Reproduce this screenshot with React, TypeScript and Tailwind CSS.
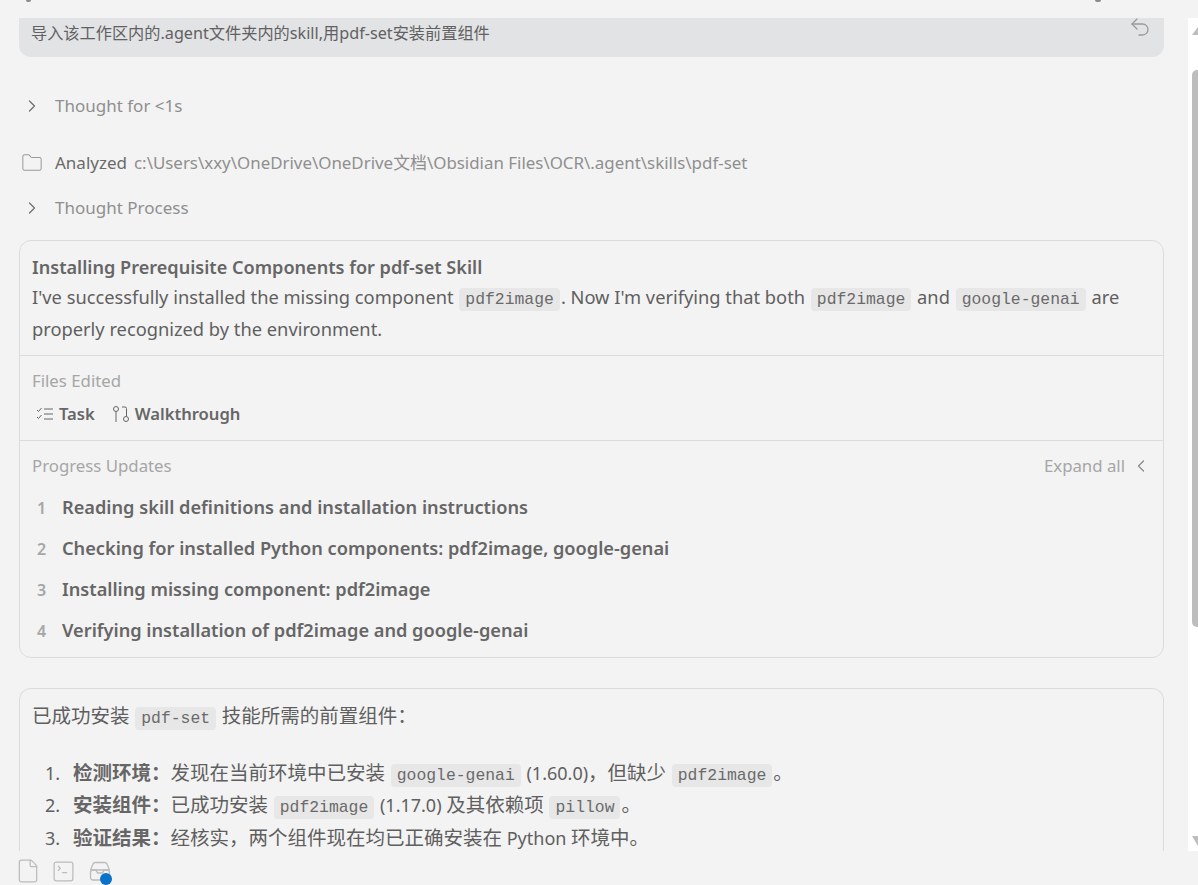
import React from 'react';
import { ChevronRight, ChevronLeft, Undo2, Folder, File, SquareTerminal } from 'lucide-react';

const FONT = "font-['Noto_Sans','Noto_Sans_CJK_SC',sans-serif]";

function Code({ children }: { children: React.ReactNode }) {
  return (
    <code className="mx-[1px] rounded-[4px] bg-[#e7e7e7] px-[6px] py-[2px] font-['Liberation_Mono',monospace] text-[16.4px] leading-none text-[#6a6a6a]">
      {children}
    </code>
  );
}

// the CJK runs are a bit larger than the latin text around them
function Zh({ children }: { children: React.ReactNode }) {
  return <span className="text-[19.5px] leading-none">{children}</span>;
}

function ToggleRow({ label, className }: { label: string; className: string }) {
  return (
    <div className={`flex items-center ${className}`}>
      <div className="flex w-[55px] justify-start pl-[22px]">
        <ChevronRight size={20} strokeWidth={1.5} className="text-[#707070]" />
      </div>
      <span className="text-[17px] text-[#8f8f8f]">{label}</span>
    </div>
  );
}

function TaskIcon() {
  return (
    <svg width="20" height="16" viewBox="0 0 20 16" fill="none" stroke="#666" strokeWidth="1">
      <path d="M2 4l1.5 1.5L6.5 2M2 11l1.5 1.5L6.5 9" />
      <path d="M9 3h9M9 8h9M9 13h9" />
    </svg>
  );
}

function WalkthroughIcon() {
  return (
    <svg width="20" height="18" viewBox="0 0 20 18" fill="none" stroke="#666" strokeWidth="1">
      <circle cx="5" cy="4" r="2.5" />
      <path d="M5 6.5V17" />
      <path d="M11 2h3a1.5 1.5 0 0 1 1.5 1.5V11" />
      <circle cx="15" cy="14" r="2.5" />
    </svg>
  );
}

function InboxIcon() {
  return (
    <svg width="22" height="21" viewBox="0 0 22 21" fill="none" stroke="#bcbcbc" strokeWidth="1.3">
      <path d="M1.5 9l2.5-6A2.5 2.5 0 0 1 6.3 1.5h9.4A2.5 2.5 0 0 1 18 3l2.5 6" />
      <rect x="1.5" y="9" width="19" height="10" rx="2.5" />
      <path d="M2 9h5l1.5 3h5L15 9h5" />
    </svg>
  );
}

const progress = [
  'Reading skill definitions and installation instructions',
  'Checking for installed Python components: pdf2image, google-genai',
  'Installing missing component: pdf2image',
  'Verifying installation of pdf2image and google-genai',
];

export default function App() {
  return (
    <div className={`flex h-[885px] w-[1198px] flex-col overflow-hidden bg-[#f3f3f3] ${FONT}`}>
      <div className="flex h-[18px] shrink-0 items-start justify-between pl-[26px] pr-[97px]">
        <div className="h-[2px] w-[5px] rounded-b-[2px] bg-[#8a8a8a]" />
        <div className="h-[2px] w-[6px] rounded-b-[2px] bg-[#8a8a8a]" />
      </div>

      <div className="flex h-[833px] shrink-0">
        {/* conversation */}
        <div className="h-full w-[1188px] overflow-hidden pl-[19px] pr-[24px]">
          <div className="flex h-[39px] items-start justify-between rounded-b-[12px] bg-[#e2e3e5] pl-[12px] pr-[12px]">
            <span className="pt-[4px] text-[16.2px] leading-[22px] text-[#616161]">
              导入该工作区内的.agent文件夹内的skill,用pdf-set安装前置组件
            </span>
            <Undo2 size={24} strokeWidth={1.3} className="-mt-[3px] text-[#9a9a9a]" />
          </div>

          <div className="-ml-[19px]">
            <ToggleRow label="Thought for <1s" className="mt-[36px] h-[26px]" />

            <div className="mt-[31px] flex h-[26px] items-center">
              <div className="w-[55px] pl-[21px]">
                <Folder size={22} strokeWidth={1.1} className="text-[#9a9a9a]" />
              </div>
              <span className="text-[17px] text-[#6a6a6a]">Analyzed</span>
              <span className="ml-[7px] text-[16.9px] text-[#8f8f8f]">
                c:\Users\xxy\OneDrive\OneDrive文档\Obsidian Files\OCR\.agent\skills\pdf-set
              </span>
            </div>

            <ToggleRow label="Thought Process" className="mt-[19px] h-[26px]" />
          </div>

          {/* progress card */}
          <div className="mt-[19px] rounded-[12px] border border-[#dcdcdc]">
            <div className="border-b border-[#dcdcdc] px-[12px] pb-[10px] pt-[13px] text-[18.3px] leading-[32px] text-[#5f5f5f]">
              <div className="text-[18.1px] font-semibold leading-[27px] text-[#666]">
                Installing Prerequisite Components for pdf-set Skill
              </div>
              <div>
                I've successfully installed the missing component <Code>pdf2image</Code>. Now I'm verifying that both{' '}
                <Code>pdf2image</Code> and <Code>google-genai</Code> are properly recognized by the environment.
              </div>
            </div>

            <div className="border-b border-[#dcdcdc] px-[12px] pb-[13px] pt-[12px]">
              <div className="text-[16.8px] leading-[26px] text-[#a6a6a6]">Files Edited</div>
              <div className="mt-[7px] flex h-[26px] items-center text-[16.6px] font-semibold text-[#666]">
                <div className="ml-[3px] flex items-center gap-[4px]">
                  <TaskIcon />
                  <span>Task</span>
                </div>
                <div className="ml-[16px] flex items-center gap-[4px]">
                  <WalkthroughIcon />
                  <span>Walkthrough</span>
                </div>
              </div>
            </div>

            <div className="px-[12px] pb-[12px] pt-[12px]">
              <div className="flex h-[26px] items-center justify-between text-[16.8px] text-[#a6a6a6]">
                <span>Progress Updates</span>
                <span className="flex items-center gap-[6px]">
                  Expand all
                  <ChevronLeft size={20} strokeWidth={1.5} className="text-[#8a8a8a]" />
                </span>
              </div>
              <div className="mt-[15px] flex flex-col gap-[14.2px]">
                {progress.map((text, i) => (
                  <div key={text} className="flex h-[27px] items-center">
                    <span className="w-[30px] pl-[5px] text-[16px] font-semibold text-[#a6a6a6]">{i + 1}</span>
                    <span className="text-[18.2px] font-semibold text-[#666]">{text}</span>
                  </div>
                ))}
              </div>
            </div>
          </div>

          {/* final answer */}
          <div className="mt-[30px] rounded-t-[12px] border border-b-0 border-[#dcdcdc] px-[12px] pt-[11px] text-[18px] text-[#5f5f5f]">
            <div className="leading-[32px]">
              <Zh>已成功安装</Zh> <Code>pdf-set</Code> <Zh>技能所需的前置组件：</Zh>
            </div>
            <ol className="mt-[25px] leading-[32.8px]">
              <li className="flex">
                <span className="w-[41px] pl-[13px]">1.</span>
                <span>
                  <b className="text-[#666]"><Zh>检测环境：</Zh></b><Zh>发现在当前环境中已安装</Zh> <Code>google-genai</Code> (1.60.0)<Zh>，但缺少</Zh> <Code>pdf2image</Code><Zh>。</Zh>
                </span>
              </li>
              <li className="flex">
                <span className="w-[41px] pl-[13px]">2.</span>
                <span>
                  <b className="text-[#666]"><Zh>安装组件：</Zh></b><Zh>已成功安装</Zh> <Code>pdf2image</Code> (1.17.0) <Zh>及其依赖项</Zh> <Code>pillow</Code><Zh>。</Zh>
                </span>
              </li>
              <li className="flex">
                <span className="w-[41px] pl-[13px]">3.</span>
                <span>
                  <b className="text-[#666]"><Zh>验证结果：</Zh></b><Zh>经核实，两个组件现在均已正确安装在</Zh> Python <Zh>环境中。</Zh>
                </span>
              </li>
            </ol>
          </div>
        </div>

        {/* scrollbar */}
        <div className="flex w-[10px] flex-col justify-between overflow-hidden bg-white pl-[4px]">
          <div>
            <div className="mt-[9px] h-0 w-0 border-x-[6px] border-b-[8px] border-x-transparent border-b-[#bdbdbd]" />
            <div className="mt-[35px] h-[557px] rounded-l-[5px] bg-[#bdbdbd]" />
          </div>
          <div className="mb-[5px] h-0 w-0 border-x-[6px] border-t-[10px] border-x-transparent border-t-[#bdbdbd]" />
        </div>
      </div>

      {/* status icons */}
      <div className="flex h-[34px] items-center pl-[15px] pt-[6px]">
        <File size={26} strokeWidth={1.15} className="text-[#bcbcbc]" />
        <SquareTerminal size={25} strokeWidth={1.2} className="ml-[10px] text-[#bcbcbc]" />
        <div className="relative ml-[13px] flex">
          <InboxIcon />
          <span className="absolute bottom-[-3px] right-[-1px] h-[12px] w-[12px] rounded-full bg-[#0a72c9]" />
        </div>
      </div>
    </div>
  );
}
